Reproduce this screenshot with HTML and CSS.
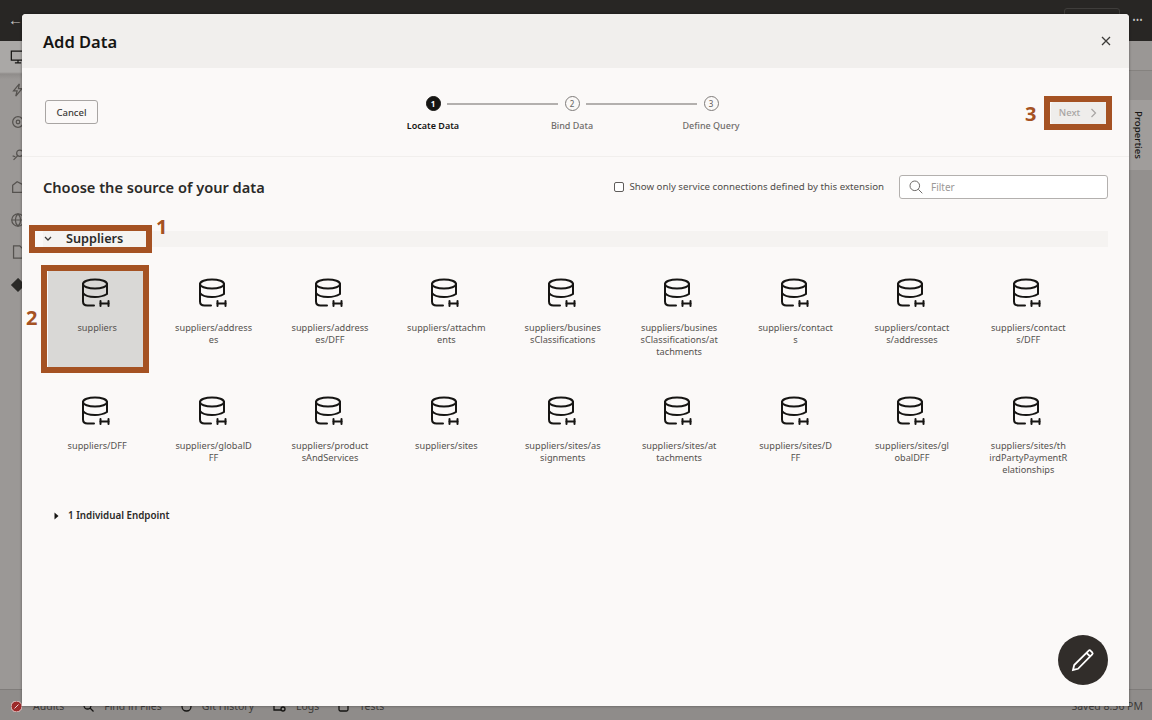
FILE: index.html
```html
<!DOCTYPE html>
<html lang="en">
<head>
	<meta charset="utf-8">
	<title>Add Data</title>
	<link rel="stylesheet" href="styles.css">
</head>
<body>

<svg class="sprites" width="0" height="0">
	<symbol id="endpoint" viewBox="0 0 30 30">
		<ellipse cx="13" cy="6" rx="12" ry="4.6"/>
		<path d="M1 6v17.500c0 2.600 2 4 4.500 4H12"/>
		<path d="M25 6v9.500M1 15c2 3 6.500 4 12 4 4 0 8-.6 12-3"/>
		<path class="plug" d="M18.500 23v5M26.500 23v5"/>
		<path class="plug-bar" d="M18.500 25.500h8"/>
	</symbol>
</svg>

<div class="app">
	<header class="app-top">
		<span class="back">←</span>
		<span class="app-top-box"></span>
		<span class="more">•••</span>
	</header>
	<div class="app-main">
		<nav class="rail">
			<svg class="rail-first" width="16" height="16" viewBox="0 0 18 18"><path d="M1.500 2.500h15v10h-15zM9 12.500v3M5.500 15.500h7"/><circle class="rail-alert" cx="16" cy="15" r="2"/></svg>
			<svg width="16" height="16" viewBox="0 0 18 18"><path d="M10.500 2 4 10h4l-1.500 6 7-8.500H9.500z"/></svg>
			<svg width="16" height="16" viewBox="0 0 18 18"><circle cx="9" cy="9" r="6"/><circle cx="9" cy="9" r="2"/></svg>
			<svg width="16" height="16" viewBox="0 0 18 18"><circle cx="11" cy="7" r="3.500"/><path d="M8.500 10 4 14.500M3 10l3 1"/></svg>
			<svg width="16" height="16" viewBox="0 0 18 18"><path d="M3 7l5-4 6 3v9H3z"/></svg>
			<svg width="16" height="16" viewBox="0 0 18 18"><circle cx="9" cy="9" r="7"/><path d="M2 9h14M9 2c-4 4-4 10 0 14M9 2c4 4 4 10 0 14"/></svg>
			<svg width="16" height="16" viewBox="0 0 18 18"><path d="M4 2h7l3 3v11H4z"/></svg>
			<svg class="rail-last" width="16" height="16" viewBox="0 0 18 18"><path d="M9 2l7 7-7 7-7-7z"/></svg>
		</nav>
		<aside class="side-tab">Properties</aside>
	</div>
	<footer class="app-bottom">
		<svg class="stop" width="11" height="11" viewBox="0 0 11 11"><circle cx="5.500" cy="5.500" r="5.500"/><path d="M3.500 7.500l4-4"/></svg>
		<span>Audits</span>
		<span class="tool">
			<svg width="11" height="11" viewBox="0 0 11 11"><circle cx="4.500" cy="4.500" r="3.500"/><path d="M7 7l3.500 3.500"/></svg>
			Find in Files
		</span>
		<span class="tool">
			<svg width="11" height="11" viewBox="0 0 11 11"><circle cx="5.500" cy="5.500" r="4.500"/></svg>
			Git History
		</span>
		<span class="tool">
			<svg width="13" height="11" viewBox="0 0 13 11"><path d="M1 1v8h7"/><circle cx="10" cy="8" r="2"/></svg>
			Logs
		</span>
		<span class="tool">
			<svg width="11" height="11" viewBox="0 0 11 11"><rect x="1" y="2" width="9" height="8" rx="1.500"/></svg>
			Tests
		</span>
		<span class="saved">Saved 8:36 PM</span>
	</footer>
</div>

<section class="dialog">
	<header class="dialog-head">
		<h1>Add Data</h1>
		<svg class="close" width="10" height="10" viewBox="0 0 10 10"><path d="M1 1l8 8M9 1l-8 8"/></svg>
	</header>

	<div class="train-bar">
		<button class="btn">Cancel</button>
		<ol class="train">
			<li class="step current"><span class="dot">1</span><span class="step-label">Locate Data</span></li>
			<li class="step"><span class="dot">2</span><span class="step-label">Bind Data</span></li>
			<li class="step"><span class="dot">3</span><span class="step-label">Define Query</span></li>
		</ol>
		<button class="btn-next">Next
			<svg width="7" height="10" viewBox="0 0 7 10"><path d="M1.500 1l4 4-4 4"/></svg>
		</button>
	</div>

	<div class="dialog-body">
		<div class="source-head">
			<h2>Choose the source of your data</h2>
			<label class="only-ext"><span class="check"></span>Show only service connections defined by this extension</label>
			<div class="filter">
				<svg width="14" height="14" viewBox="0 0 14 14"><circle cx="5.800" cy="5.800" r="4.800"/><path d="M9.300 9.300l4 4"/></svg>
				<span>Filter</span>
			</div>
		</div>

		<div class="group-head">
			<svg width="8" height="6" viewBox="0 0 8 6"><path d="M1 1l3 3 3-3"/></svg>
			<span>Suppliers</span>
		</div>

		<div class="tiles">
			<div class="tile selected"><svg><use href="#endpoint"/></svg><p>suppliers</p></div>
			<div class="tile"><svg><use href="#endpoint"/></svg><p>suppliers/address<br>es</p></div>
			<div class="tile"><svg><use href="#endpoint"/></svg><p>suppliers/address<br>es/DFF</p></div>
			<div class="tile"><svg><use href="#endpoint"/></svg><p>suppliers/attachm<br>ents</p></div>
			<div class="tile"><svg><use href="#endpoint"/></svg><p>suppliers/busines<br>sClassifications</p></div>
			<div class="tile"><svg><use href="#endpoint"/></svg><p>suppliers/busines<br>sClassifications/at<br>tachments</p></div>
			<div class="tile"><svg><use href="#endpoint"/></svg><p>suppliers/contact<br>s</p></div>
			<div class="tile"><svg><use href="#endpoint"/></svg><p>suppliers/contact<br>s/addresses</p></div>
			<div class="tile"><svg><use href="#endpoint"/></svg><p>suppliers/contact<br>s/DFF</p></div>
			<div class="tile"><svg><use href="#endpoint"/></svg><p>suppliers/DFF</p></div>
			<div class="tile"><svg><use href="#endpoint"/></svg><p>suppliers/globalD<br>FF</p></div>
			<div class="tile"><svg><use href="#endpoint"/></svg><p>suppliers/product<br>sAndServices</p></div>
			<div class="tile"><svg><use href="#endpoint"/></svg><p>suppliers/sites</p></div>
			<div class="tile"><svg><use href="#endpoint"/></svg><p>suppliers/sites/as<br>signments</p></div>
			<div class="tile"><svg><use href="#endpoint"/></svg><p>suppliers/sites/at<br>tachments</p></div>
			<div class="tile"><svg><use href="#endpoint"/></svg><p>suppliers/sites/D<br>FF</p></div>
			<div class="tile"><svg><use href="#endpoint"/></svg><p>suppliers/sites/gl<br>obalDFF</p></div>
			<div class="tile"><svg><use href="#endpoint"/></svg><p>suppliers/sites/th<br>irdPartyPaymentR<br>elationships</p></div>
		</div>

		<div class="endpoint-row">
			<svg width="5" height="8" viewBox="0 0 5 8"><path d="M.5.500 4.500 4 .5 7.500z"/></svg>
			<span>1 Individual Endpoint</span>
		</div>
	</div>

	<button class="fab">
		<svg width="24" height="24" viewBox="0 0 24 24"><path d="M2 22l1.200-5L17.500 2.800c.8-.8 1.500-.8 2.200 0l1.500 1.500c.7.700.7 1.400 0 2.200L7 20.800zM15.500 4.800l3.700 3.700"/></svg>
	</button>
</section>

<!-- tutorial callouts drawn on top of the screenshot -->
<div class="callout callout-group"></div>
<div class="callout callout-tile"></div>
<div class="callout callout-next"></div>
<span class="callout-num num-1">1</span>
<span class="callout-num num-2">2</span>
<span class="callout-num num-3">3</span>

</body>
</html>
```

FILE: styles.css
```css
* {
	box-sizing: border-box;
}

html, body {
	height: 100%;
}

body {
	margin: 0;
	overflow: hidden;
	position: relative;
	font-family: "Noto Sans", "Open Sans", sans-serif;
	color: #161513;
	background: #93908e;
}

.sprites {
	position: absolute;
}

button {
	font-family: inherit;
}

/* page behind the dialog */
.app {
	height: 720px;
	display: flex;
	flex-direction: column;
}

.app-top {
	height: 41px;
	background: #282624;
	color: #c9c7c5;
	display: flex;
	align-items: center;
	padding: 0 9px 0 8px;
}

.back {
	font-size: 15px;
	line-height: 1;
	margin-bottom: 2px;
}

.app-top-box {
	width: 56px;
	height: 33px;
	margin: 8px 0 0 auto;
	border: 1px solid #3f3d3b;
	border-radius: 3px;
}

.more {
	font-size: 8px;
	letter-spacing: 0.5px;
	margin-left: 12px;
	margin-bottom: 2px;
}

.app-main {
	flex: 1;
	display: flex;
	justify-content: space-between;
	min-height: 0;
	border-bottom: 1px solid #7f7c7a;
	background: linear-gradient(#9a9795 29px, #85827f 29px, #85827f 30px, #93908e 30px);
}

.rail {
	width: 22px;
	display: flex;
	flex-direction: column;
	align-items: flex-start;
	padding: 8px 0 0 10px;
	gap: 16.500px;
	background: linear-gradient(#aaa8a6 31px, #8f8c8a 33px, #9b9896 38px);
}

.rail svg {
	flex: none;
	fill: none;
	stroke: #55524f;
	stroke-width: 1.400;
}

.rail-first.rail-first {
	stroke: #161513;
}

.rail-alert {
	fill: #b3261e;
	stroke: none;
}

.rail-last.rail-last {
	fill: #2b2a28;
	stroke: #2b2a28;
}

.side-tab {
	margin-top: 59px;
	width: 23px;
	height: 70px;
	padding-right: 5px;
	writing-mode: vertical-rl;
	font-size: 9.700px;
	font-weight: 500;
	line-height: 18px;
	text-align: center;
	background: #a09d9b;
	color: #161513;
}

.app-bottom {
	height: 30px;
	background: #8f8c8a;
	display: flex;
	align-items: center;
	padding: 2px 9px 0 11px;
	font-size: 10.500px;
	color: #3d3b39;
	gap: 40px;
}

.tool {
	display: flex;
	align-items: center;
	gap: 10px;
	margin-left: -21px;
}

.tool svg {
	fill: none;
	stroke: #161513;
	stroke-width: 1.300;
}

.stop {
	flex: none;
	margin-right: -29px;
	fill: #9c2a2a;
	stroke: #e8d5d5;
	stroke-width: 1;
}

.saved {
	margin-left: auto;
}

/* dialog */
.dialog {
	position: absolute;
	left: 22px;
	top: 14px;
	width: 1107px;
	height: 692px;
	background: #fbf9f8;
	border-radius: 4px 4px 0 0;
	box-shadow: 0 0 3px rgba(0, 0, 0, 0.4);
}

.dialog-head {
	height: 54px;
	background: #f1efed;
	display: flex;
	align-items: center;
	justify-content: space-between;
	padding: 0 18px 0 21px;
	border-radius: 4px 4px 0 0;
}

.dialog-head h1 {
	margin: 0;
	font-size: 16.500px;
	font-weight: 600;
}

.close {
	fill: none;
	stroke: #3d3b39;
	stroke-width: 1.300;
	margin-top: -1px;
}

.train-bar {
	height: 89px;
	border-bottom: 1px solid #f1efed;
	display: flex;
	align-items: flex-start;
	justify-content: space-between;
	padding: 28px 22px 0 23px;
	position: relative;
}

.btn {
	margin-top: 4px;
	width: 53px;
	height: 24px;
	padding: 0;
	font-size: 9.500px;
	font-weight: 500;
	color: #3d3b39;
	background: #fbf9f8;
	border: 1px solid #a8a5a3;
	border-radius: 3px;
}

.train {
	list-style: none;
	margin: 0 0 0 -5px;
	padding: 0;
	display: flex;
	width: 417px;
}

.step {
	flex: 1;
	display: flex;
	flex-direction: column;
	align-items: center;
	gap: 8px;
	position: relative;
	font-size: 9px;
	font-weight: 500;
	color: #6f6c6a;
}

.step + .step::before {
	content: "";
	position: absolute;
	top: 6.500px;
	right: 50%;
	width: 111px;
	margin-right: 14px;
	height: 2px;
	background: #b3b0ae;
}

.current {
	font-weight: 600;
	color: #161513;
}

.dot {
	width: 15px;
	height: 15px;
	border: 1px solid #7f7c7a;
	border-radius: 50%;
	font-size: 8px;
	line-height: 13px;
	text-align: center;
	background: #fbf9f8;
}

.current .dot {
	background: #161513;
	border-color: #161513;
	color: #fff;
	font-weight: 700;
}

.btn-next {
	margin-top: 6px;
	width: 56px;
	height: 22px;
	padding: 0 2px 1px 0;
	display: flex;
	align-items: center;
	justify-content: center;
	gap: 10px;
	font-size: 9.500px;
	font-weight: 500;
	color: #a8a5a3;
	background: #efedeb;
	border: 0;
	border-radius: 3px;
}

.btn-next svg {
	fill: none;
	stroke: #a8a5a3;
	stroke-width: 1.200;
}

.dialog-body {
	padding: 0 21px;
}

.source-head {
	height: 61px;
	padding-bottom: 2px;
	display: flex;
	align-items: center;
}

.source-head h2 {
	margin: 0 auto 0 0;
	font-size: 14.600px;
	font-weight: 600;
	color: #2b2a28;
}

.only-ext {
	display: flex;
	align-items: center;
	gap: 5px;
	font-size: 9.700px;
	color: #4f4c4a;
}

.check {
	width: 10px;
	height: 10px;
	border: 1px solid #5f5c5a;
	border-radius: 2px;
	background: #fff;
}

.filter {
	width: 209px;
	height: 24px;
	margin-left: 15px;
	padding-left: 9px;
	display: flex;
	align-items: center;
	gap: 8px;
	font-size: 10px;
	color: #9c9997;
	background: #fff;
	border: 1px solid #b3b0ae;
	border-radius: 3px;
}

.filter svg {
	fill: none;
	stroke: #6f6c6a;
	stroke-width: 1;
}

.group-head {
	height: 16px;
	margin-top: 13px;
	display: flex;
	align-items: center;
	gap: 14px;
	padding: 0 0 2px 1px;
	background: #f5f3f1;
	font-size: 12.700px;
	font-weight: 600;
	color: #2b2a28;
}

.group-head svg {
	margin-top: 2px;
	fill: none;
	stroke: #3d3b39;
	stroke-width: 1.300;
}

.tiles {
	display: grid;
	grid-template-columns: repeat(9, 116.400px);
	grid-auto-rows: 118px;
	margin: 24px 0 0 -4px;
}

.tile {
	width: 98px;
	height: 96px;
	justify-self: center;
	padding-top: 7px;
	text-align: center;
}

.tile svg {
	display: block;
	width: 30px;
	height: 30px;
	margin: 0 auto;
	fill: none;
	stroke: #161513;
	stroke-width: 2;
	stroke-linecap: round;
}

.tile .plug {
	stroke-width: 2.600;
	stroke-linecap: butt;
}

.tile .plug-bar {
	stroke-width: 1.800;
	stroke-linecap: butt;
}

.tile p {
	margin: 14px -6px 0;
	font-size: 9.200px;
	line-height: 12px;
	color: #55524f;
}

.selected {
	background: #d9d8d6;
}

.endpoint-row {
	margin-top: 2px;
	margin-left: 11px;
	display: flex;
	align-items: center;
	gap: 9px;
	font-size: 9.800px;
	font-weight: 600;
	color: #2b2a28;
}

.endpoint-row svg {
	fill: #161513;
}

.fab {
	position: absolute;
	right: 21px;
	bottom: 21px;
	width: 50px;
	height: 50px;
	padding: 0;
	border: 0;
	border-radius: 50%;
	background: #312d2a;
	display: flex;
	align-items: center;
	justify-content: center;
}

.fab svg {
	fill: none;
	stroke: #fff;
	stroke-width: 1.800;
}

/* callouts */
.callout {
	position: absolute;
	border: 6px solid #a55223;
}

.callout-group {
	left: 29px;
	top: 225px;
	width: 123px;
	height: 28px;
}

.callout-tile {
	left: 41px;
	top: 265px;
	width: 108px;
	height: 108px;
}

.callout-next {
	left: 1044px;
	top: 96px;
	width: 68px;
	height: 34px;
}

.callout-num {
	position: absolute;
	font-size: 20px;
	line-height: 24px;
	font-weight: 700;
	color: #a55223;
}

.num-1 {
	left: 156px;
	top: 215px;
}

.num-2 {
	left: 26px;
	top: 306px;
}

.num-3 {
	left: 1025px;
	top: 102px;
}
```
